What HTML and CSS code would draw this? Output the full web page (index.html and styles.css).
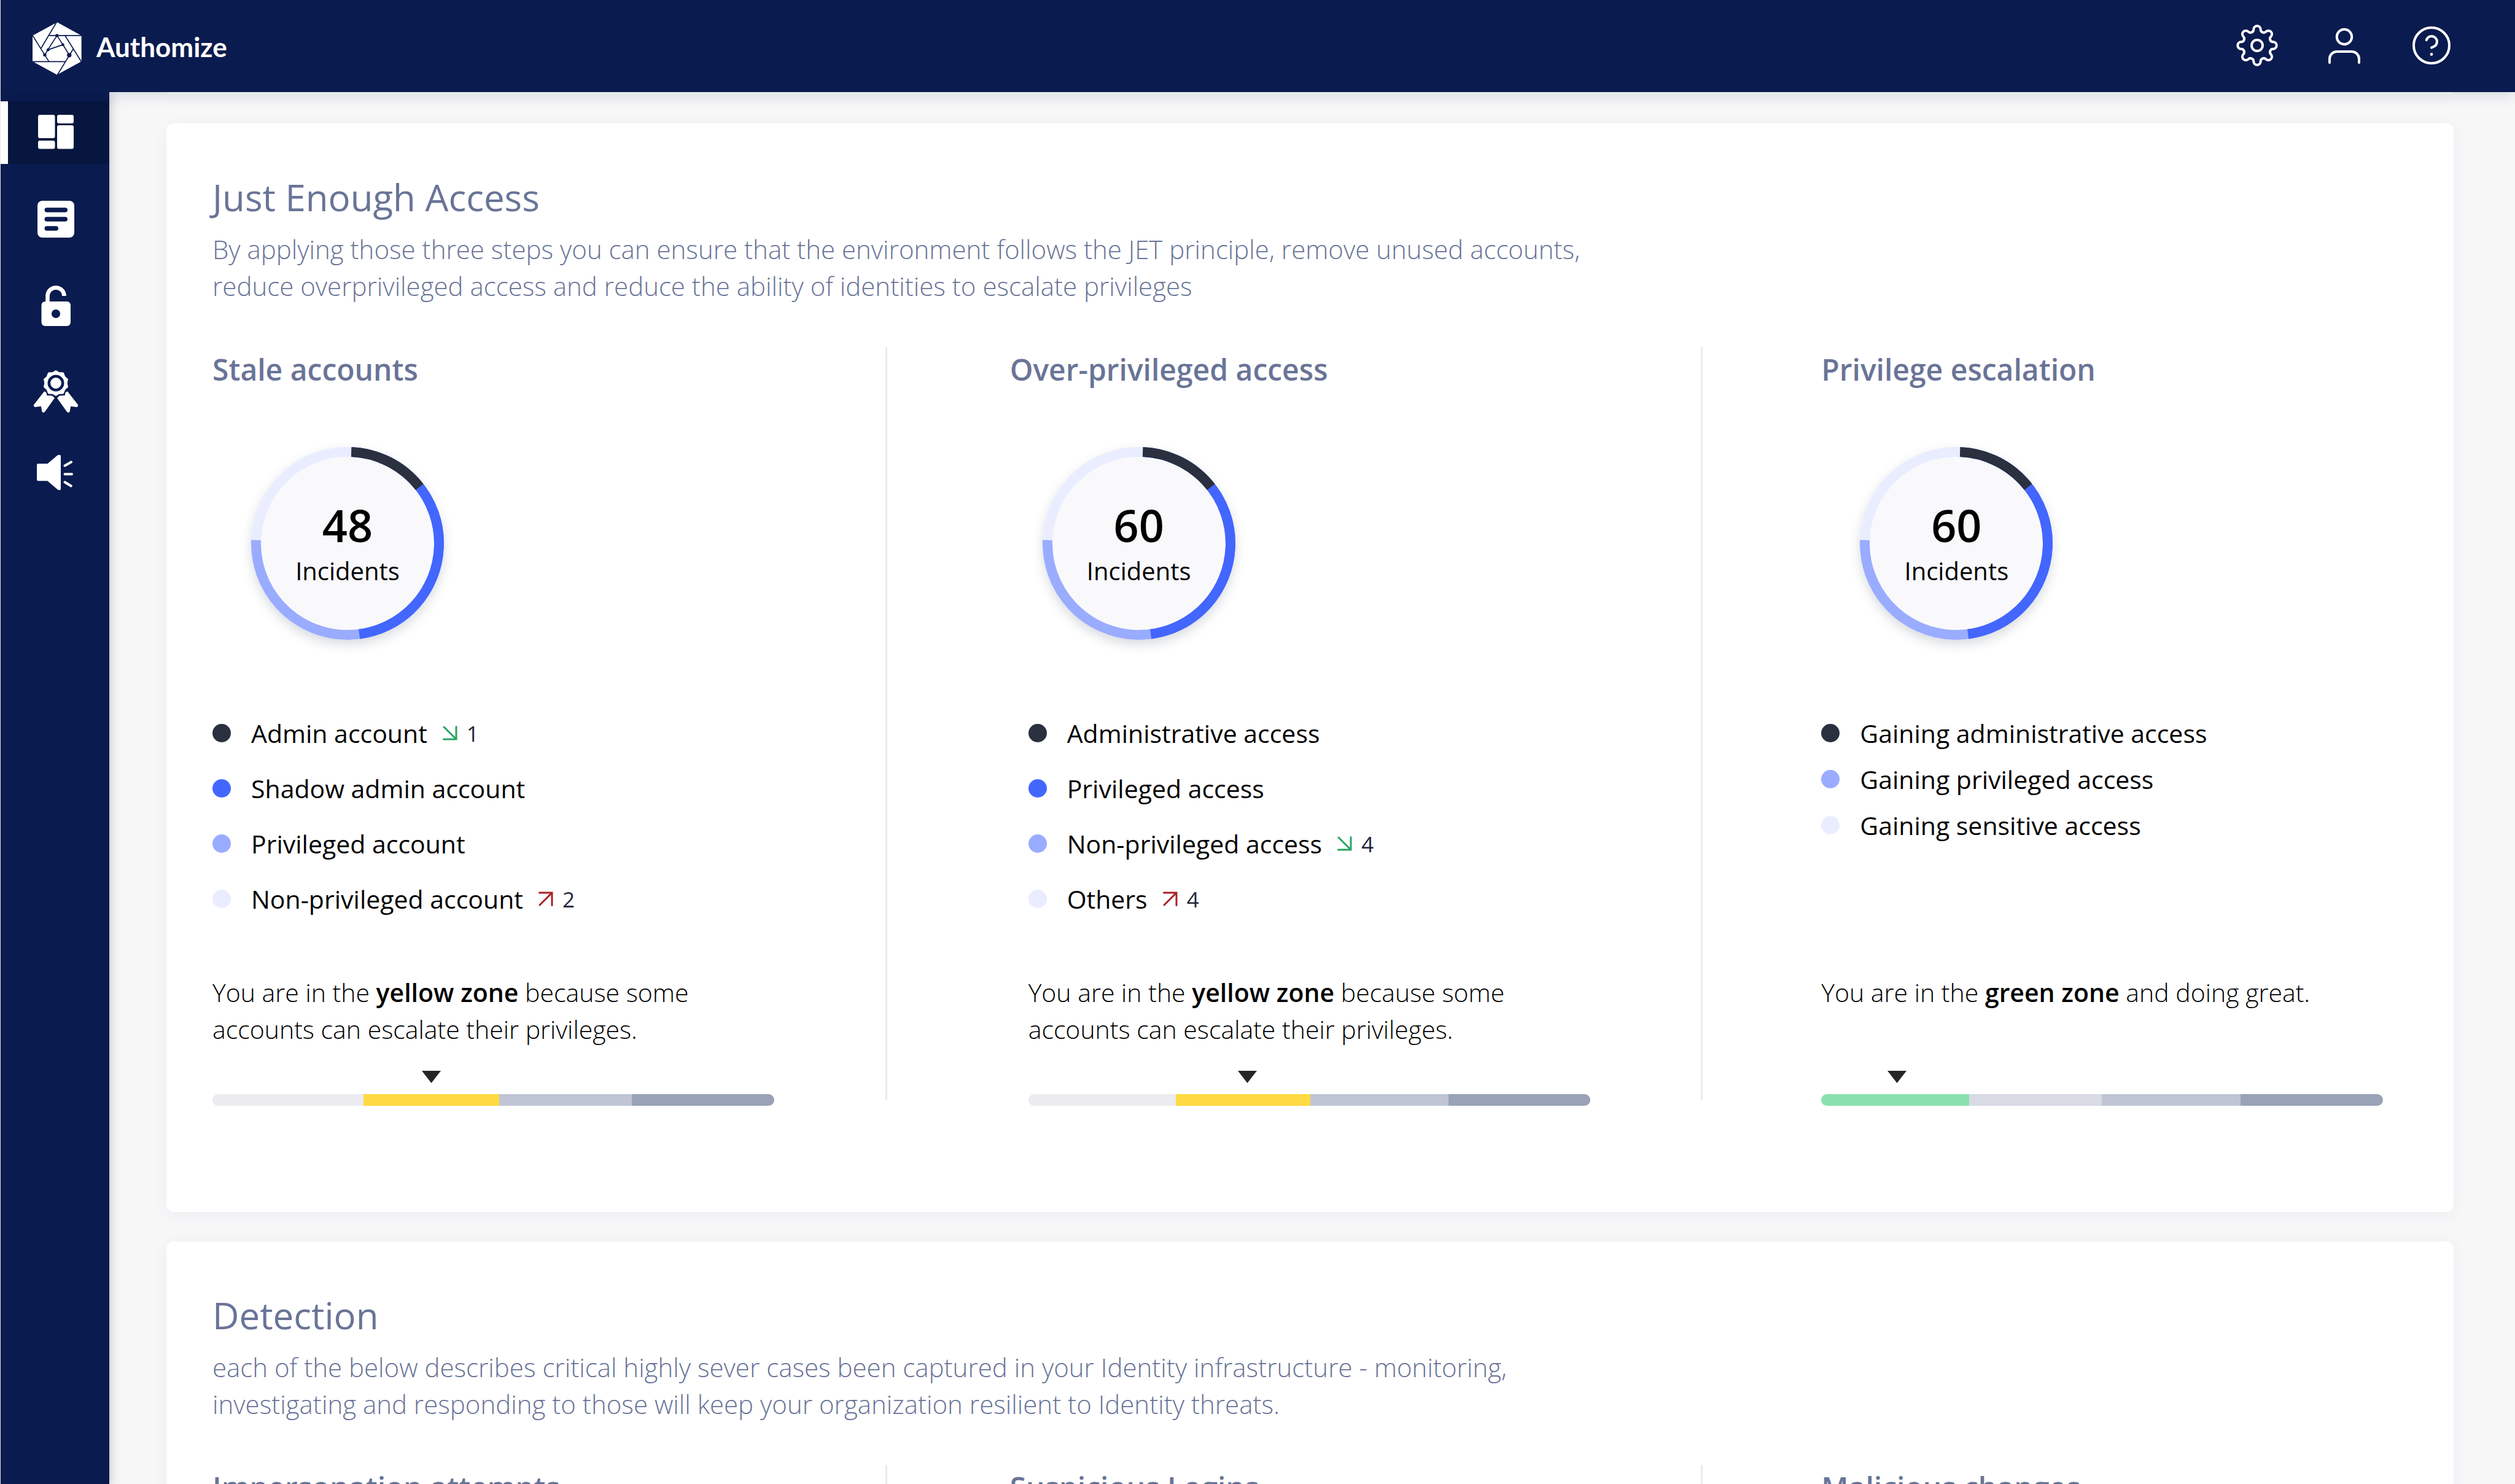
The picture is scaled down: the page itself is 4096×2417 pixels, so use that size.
FILE: index.html
```html
<!DOCTYPE html>
<html lang="en">
<head>
<meta charset="utf-8">
<meta name="viewport" content="width=device-width, initial-scale=1">
<title>Authomize</title>
<link rel="stylesheet" href="styles.css">
</head>
<body>
<div class="app">
  <header class="topbar">
    <a class="brand" href="#">
      <svg class="brand-mark" viewBox="158 108 241 257" aria-hidden="true">
        <path fill="#fff" d="M279 108 398 173V300L278 365 158 300V173Z"/>
        <g fill="none" stroke="#0a1b4f" stroke-width="5">
          <path d="M278 104 200 235M158 172 238 300M154 301H318M278 369 358 238M399 304 318 174M402 173H240M278 173 233 243 307 218 338 268M278 173 307 218M233 243 218 268"/>
        </g>
        <g fill="#0a1b4f"><circle cx="278" cy="173" r="8"/><circle cx="307" cy="218" r="7"/><circle cx="234" cy="243" r="7"/><circle cx="218" cy="268" r="8"/><circle cx="338" cy="269" r="11"/></g>
      </svg>
      <span class="brand-name">Authomize</span>
    </a>
    <nav class="tools" aria-label="Account">
      <button class="tool" type="button" aria-label="Settings">
        <svg viewBox="-34 -34 68 68"><path d="M-5.7-26A5.7 5.7 0 0 1 5.7-26A5.07 5.07 0 0 0 14.35-22.42A5.7 5.7 0 0 1 22.42-14.35A5.07 5.07 0 0 0 26-5.7A5.7 5.7 0 0 1 26 5.7A5.07 5.07 0 0 0 22.42 14.35A5.7 5.7 0 0 1 14.35 22.42A5.07 5.07 0 0 0 5.7 26A5.7 5.7 0 0 1-5.7 26A5.07 5.07 0 0 0-14.35 22.42A5.7 5.7 0 0 1-22.42 14.35A5.07 5.07 0 0 0-26 5.7A5.7 5.7 0 0 1-26-5.7A5.07 5.07 0 0 0-22.42-14.35A5.7 5.7 0 0 1-14.35-22.42A5.07 5.07 0 0 0-5.7-26Z"/><circle r="9"/></svg>
      </button>
      <button class="tool" type="button" aria-label="Profile">
        <svg viewBox="-34 -34 68 68"><circle cy="-14" r="12.2"/><path d="M-24 28V22A12 12 0 0 1-12 10H12A12 12 0 0 1 24 22V28"/></svg>
      </button>
      <button class="tool" type="button" aria-label="Help">
        <svg viewBox="-34 -34 68 68"><circle r="29"/><path d="M-8.3-8.7A8.8 8.8 0 1 1 4.5 1.5Q1.5 3 0 3.6"/><circle class="solid" cy="14.5" r="2.4"/></svg>
      </button>
    </nav>
  </header>

  <div class="shell">
    <nav class="sidebar" aria-label="Main">
      <a class="side-link side-link--active" href="#" aria-label="Dashboard" aria-current="page">
        <svg viewBox="0 0 80 80"><rect x="12" y="11" width="27.500" height="38" rx="3"/><rect x="43" y="11" width="27" height="14" rx="3"/><rect x="43" y="28" width="27" height="38.500" rx="3"/><rect x="12" y="53" width="27.500" height="13.500" rx="3"/></svg>
      </a>
      <a class="side-link" href="#" aria-label="Reports">
        <svg viewBox="0 0 80 80"><rect x="11" y="12" width="60" height="60" rx="8"/><path fill="none" stroke="#0a1b4f" stroke-width="7.500" stroke-linecap="round" d="M26.300 27H56.200M26.300 42H56.200M26.300 57H41.200"/></svg>
      </a>
      <a class="side-link" href="#" aria-label="Access">
        <svg viewBox="0 0 80 80"><path fill="none" stroke="#fff" stroke-width="6.600" d="M27.500 39V28A13.500 13.500 0 0 1 54.500 28"/><rect x="17.500" y="37" width="47.500" height="40" rx="6"/><circle cx="41" cy="57" r="7" fill="#0a1b4f"/></svg>
      </a>
      <a class="side-link" href="#" aria-label="Certifications">
        <svg viewBox="0 0 80 80"><path stroke="#fff" stroke-linejoin="round" d="M41 10.500 46.600 13.700 53.300 14 55.700 20.300 60.500 24.500 59.200 31 60.500 37.500 55.700 41.700 53.300 48 46.600 48.300 41 51.500 35.400 48.300 28.700 48 26.300 41.700 21.500 37.500 22.800 31 21.500 24.500 26.300 20.300 28.700 14 35.400 13.700Z"/><circle cx="41" cy="31" r="11.200" fill="none" stroke="#0a1b4f" stroke-width="4.500"/><path stroke="#fff" stroke-linejoin="round" d="M22.300 44.800 25 46.500 26 51.600 35 52 38.500 55.200 22.700 77.500Q20.500 79.500 19 77.700L17.300 68.300 6.500 69.500Q4.500 68.500 5.500 66.300ZM59.700 44.800 57 46.500 56 51.600 47 52 43.500 55.200 59.300 77.500Q61.500 79.500 63 77.700L64.700 68.300 75.500 69.500Q77.500 68.500 76.500 66.300Z"/></svg>
      </a>
      <a class="side-link" href="#" aria-label="Announcements">
        <svg viewBox="0 0 80 80"><path d="M12 23.300H27.300L44 9.200Q49 7.500 49 11V64Q49 67.500 44 65.600L27.300 51.300H12Q10 51.300 10 49.300V25.300Q10 23.300 12 23.300Z"/><path fill="none" stroke="#fff" stroke-width="4" stroke-linecap="round" d="M55.500 26.500 66 20.500M55.500 40.300H67M55.500 53.300 65.700 59.500"/></svg>
      </a>
    </nav>

    <main class="content">
      <div class="card card--tail" aria-hidden="true"></div>

      <section class="card" aria-labelledby="jea">
        <h2 class="card-title" id="jea">Just Enough Access</h2>
        <p class="card-text">By applying those three steps you can ensure that the environment follows the JET principle, remove unused accounts,<br>reduce overprivileged access and reduce the ability of identities to escalate privileges</p>
        <div class="columns">
          <article class="column">
            <h3 class="column-title">Stale accounts</h3>
            <div class="column-body">
              <div class="donut">
                <svg class="donut-ring" viewBox="0 0 314 314" aria-hidden="true"><use href="#ring"/></svg>
                <strong class="donut-value">48</strong>
                <span class="donut-label">Incidents</span>
              </div>
              <ul class="legend">
                <li><i class="dot dot--dark"></i>Admin account<span class="trend trend--down"><svg viewBox="0 0 24 24" aria-hidden="true"><path d="M2 2 22 22M22 1.500V22H1.500"/></svg>1</span></li>
                <li><i class="dot dot--blue"></i>Shadow admin account</li>
                <li><i class="dot dot--light"></i>Privileged account</li>
                <li><i class="dot dot--pale"></i>Non-privileged account<span class="trend trend--up"><svg viewBox="0 0 24 24" aria-hidden="true"><path d="M2 22 22 2M1.500 2H22V22.500"/></svg>2</span></li>
              </ul>
              <div class="zone">
                <p class="zone-text">You are in the <b>yellow zone</b> because some<br>accounts can escalate their privileges.</p>
                <div class="meter" role="img" aria-label="Yellow zone">
                  <svg class="marker" style="margin-left:37.300%" viewBox="0 0 31 20"><path d="M0 0H31L15.500 20Z"/></svg>
                  <div class="bar" style="grid-template-columns:246fr 221fr 216fr 232fr"><i class="seg seg--1"></i><i class="seg seg--yellow"></i><i class="seg seg--3"></i><i class="seg seg--4"></i></div>
                </div>
              </div>
            </div>
          </article>

          <article class="column column--inset">
            <h3 class="column-title">Over-privileged access</h3>
            <div class="column-body">
              <div class="donut">
                <svg class="donut-ring" viewBox="0 0 314 314" aria-hidden="true"><use href="#ring"/></svg>
                <strong class="donut-value">60</strong>
                <span class="donut-label">Incidents</span>
              </div>
              <ul class="legend">
                <li><i class="dot dot--dark"></i>Administrative access</li>
                <li><i class="dot dot--blue"></i>Privileged access</li>
                <li><i class="dot dot--light"></i>Non-privileged access<span class="trend trend--down"><svg viewBox="0 0 24 24" aria-hidden="true"><path d="M2 2 22 22M22 1.500V22H1.500"/></svg>4</span></li>
                <li><i class="dot dot--pale"></i>Others<span class="trend trend--up"><svg viewBox="0 0 24 24" aria-hidden="true"><path d="M2 22 22 2M1.500 2H22V22.500"/></svg>4</span></li>
              </ul>
              <div class="zone">
                <p class="zone-text">You are in the <b>yellow zone</b> because some<br>accounts can escalate their privileges.</p>
                <div class="meter" role="img" aria-label="Yellow zone">
                  <svg class="marker" style="margin-left:37.300%" viewBox="0 0 31 20"><path d="M0 0H31L15.500 20Z"/></svg>
                  <div class="bar" style="grid-template-columns:240fr 219fr 225fr 231fr"><i class="seg seg--1"></i><i class="seg seg--yellow"></i><i class="seg seg--3"></i><i class="seg seg--4"></i></div>
                </div>
              </div>
            </div>
          </article>

          <article class="column">
            <h3 class="column-title">Privilege escalation</h3>
            <div class="column-body">
              <div class="donut">
                <svg class="donut-ring" viewBox="0 0 314 314" aria-hidden="true"><use href="#ring"/></svg>
                <strong class="donut-value">60</strong>
                <span class="donut-label">Incidents</span>
              </div>
              <ul class="legend legend--tight">
                <li><i class="dot dot--dark"></i>Gaining administrative access</li>
                <li><i class="dot dot--light"></i>Gaining privileged access</li>
                <li><i class="dot dot--pale"></i>Gaining sensitive access</li>
              </ul>
              <div class="zone">
                <p class="zone-text">You are in the <b>green zone</b> and doing great.</p>
                <div class="meter" role="img" aria-label="Green zone">
                  <svg class="marker" style="margin-left:11.800%" viewBox="0 0 31 20"><path d="M0 0H31L15.500 20Z"/></svg>
                  <div class="bar" style="grid-template-columns:240fr 216fr 225fr 232fr"><i class="seg seg--green"></i><i class="seg seg--2"></i><i class="seg seg--3"></i><i class="seg seg--4"></i></div>
                </div>
              </div>
            </div>
          </article>
        </div>
      </section>

      <section class="card" aria-labelledby="detection">
        <h2 class="card-title" id="detection">Detection</h2>
        <p class="card-text">each of the below describes critical highly sever cases been captured in your Identity infrastructure - monitoring,<br>investigating and responding to those will keep your organization resilient to Identity threats.</p>
        <div class="columns">
          <article class="column"><h3 class="column-title">Impersonation attempts</h3></article>
          <article class="column column--inset"><h3 class="column-title">Suspicious Logins</h3></article>
          <article class="column"><h3 class="column-title">Malicious changes</h3></article>
        </div>
      </section>
    </main>
  </div>
</div>

<svg class="defs" width="0" height="0" aria-hidden="true">
  <defs>
    <g id="ring">
      <circle cx="157" cy="157" r="150" fill="#f9f9fc"/>
      <g fill="none" stroke-width="16" transform="rotate(-87.6 157 157)">
        <circle cx="157" cy="157" r="149" stroke="#e9edff"/>
        <circle cx="157" cy="157" r="149" stroke="#9aacff" pathLength="360" stroke-dasharray="269.600 90.400"/>
        <circle cx="157" cy="157" r="149" stroke="#4366ff" pathLength="360" stroke-dasharray="170.200 189.800"/>
        <circle cx="157" cy="157" r="149" stroke="#2b303f" pathLength="360" stroke-dasharray="49.500 310.500"/>
      </g>
    </g>
  </defs>
</svg>
</body>
</html>
```
FILE: styles.css
```css
:root {
  --navy: #0a1b4f;
  --slate: #697497;
  --line: #ebebf0;
}

* { box-sizing: border-box; }

body {
  margin: 0;
  color: #000;
  background: #f7f7f8;
  font-family: "Open Sans", "Noto Sans", sans-serif;
}

h2, h3, p, ul { margin: 0; padding: 0; }
ul { list-style: none; }

.app {
  display: flex;
  flex-direction: column;
  height: 100vh;
  overflow: hidden;
  border-left: 1px solid #e3e5ea;
}

/* Top bar */
.topbar {
  position: relative;
  z-index: 2;
  display: flex;
  flex: none;
  justify-content: space-between;
  height: 150px;
  padding: 0 102px 0 52px;
  background: var(--navy);
  box-shadow: 0 4px 24px rgba(10, 20, 60, .14);
}

.brand {
  display: flex;
  gap: 24px;
  margin-top: 36px;
  color: #fff;
  text-decoration: none;
}

.brand-mark { width: 80px; height: 86px; }

.brand-name {
  font: 700 44px/80px Lato, sans-serif;
}

.tools {
  display: flex;
  align-items: flex-start;
  gap: 74px;
  padding-top: 40px;
}

.tool {
  width: 68px;
  height: 68px;
  padding: 0;
  border: 0;
  background: none;
  cursor: pointer;
}

.tool svg {
  display: block;
  width: 68px;
  height: 68px;
  fill: none;
  stroke: #fff;
  stroke-width: 4;
  stroke-linecap: round;
}

.tool .solid { fill: #fff; stroke: none; }

.shell {
  display: flex;
  flex: 1;
  min-height: 0;
}

/* Side navigation */
.sidebar {
  position: relative;
  z-index: 1;
  display: flex;
  flex: none;
  flex-direction: column;
  gap: 37px;
  width: 177px;
  padding-top: 15px;
  background: var(--navy);
  box-shadow: 2px 0 16px rgba(10, 20, 60, .22);
}

.side-link {
  display: grid;
  place-items: center;
  height: 102px;
}

.side-link--active {
  background: #07163f;
  box-shadow: inset 12px 0 #fff;
}

.side-link svg {
  width: 80px;
  height: 80px;
  fill: #fff;
}

/* Cards */
.content {
  display: flex;
  flex: 1;
  flex-direction: column;
  gap: 48px;
  min-width: 0;
  padding: 0 100px 0 93px;
  overflow: hidden;
}

.card {
  flex: none;
  padding: 80px 0 182px 75px;
  border-radius: 12px;
  background: #fff;
  box-shadow: 0 4px 24px rgba(60, 80, 150, .06);
}

.card--tail {
  height: 3px;
  padding: 0;
  border-radius: 0 0 12px 12px;
}

.card-title {
  color: var(--slate);
  font-size: 60px;
  font-weight: 500;
  line-height: 80px;
}

.card-text {
  margin-top: 15px;
  color: var(--slate);
  font-size: 42px;
  font-weight: 300;
  line-height: 60px;
}

.columns {
  display: grid;
  grid-template-columns: 1099fr 1329fr 1223fr;
  margin-top: 69px;
}

.column {
  display: flex;
  flex-direction: column;
  padding-top: 5px;
  border-right: 3px solid var(--line);
}

.column:last-child {
  padding-left: 193px;
  border-right: 0;
}

.column--inset { padding-left: 200px; }

.column-title {
  color: var(--slate);
  font-size: 48px;
  font-weight: 600;
  line-height: 64px;
}

.column-body {
  display: flex;
  flex: 1;
  flex-direction: column;
}

.column--inset .column-body { padding-left: 30px; }

/* Incident ring */
.donut {
  position: relative;
  display: grid;
  grid-template-rows: 72px 60px;
  row-gap: 9px;
  justify-items: center;
  width: 314px;
  height: 314px;
  margin: 94px 0 0 63px;
  padding-top: 91px;
  border-radius: 50%;
  box-shadow: 0 8px 18px rgba(40, 55, 75, .18);
}

.column--inset .donut { margin-left: 23px; }

.donut-ring {
  position: absolute;
  inset: 0;
  z-index: 0;
}

.donut-value, .donut-label { z-index: 1; }
.donut-value { font-size: 72px; font-weight: 600; line-height: 72px; }
.donut-label { font-size: 40px; line-height: 60px; }

/* Legend */
.legend {
  margin-top: 107px;
  font-size: 41px;
}

.legend li {
  display: flex;
  align-items: center;
  height: 90px;
}

.legend--tight { margin-top: 114px; }
.legend--tight li { height: 75px; }

.dot {
  width: 30px;
  height: 30px;
  margin-right: 33px;
  border-radius: 50%;
}

.dot--dark { background: #2b303f; }
.dot--blue { background: #4366ff; }
.dot--light { background: #9aacff; }
.dot--pale { background: #e9edff; }

.trend {
  display: flex;
  align-items: center;
  gap: 15px;
  margin-left: 25px;
  color: #22273a;
  font-size: 35px;
}

.trend svg {
  width: 24px;
  height: 24px;
  fill: none;
  stroke-width: 3;
  stroke-linecap: round;
}

.trend--down { stroke: #27a562; }
.trend--up { stroke: #a82226; }

/* Zone meter */
.zone {
  margin-top: auto;
  padding-top: 77px;
}

.zone-text {
  min-height: 120px;
  font-size: 41px;
  font-weight: 300;
  line-height: 60px;
}

.zone-text b { font-weight: 600; }

.meter {
  max-width: 915px;
  margin: 38px 0 -9px;
}

.marker {
  display: block;
  width: 31px;
  height: 20px;
  fill: #272526;
}

.bar {
  display: grid;
  height: 19px;
  margin-top: 18px;
  border-radius: 10px;
  overflow: hidden;
}

.seg--1 { background: #ebebf0; }
.seg--2 { background: #d8dbe3; }
.seg--3 { background: #bfc5d4; }
.seg--4 { background: #9aa2b7; }
.seg--yellow { background: #ffda42; }
.seg--green { background: #8ae1af; }

.defs { position: absolute; }
```
